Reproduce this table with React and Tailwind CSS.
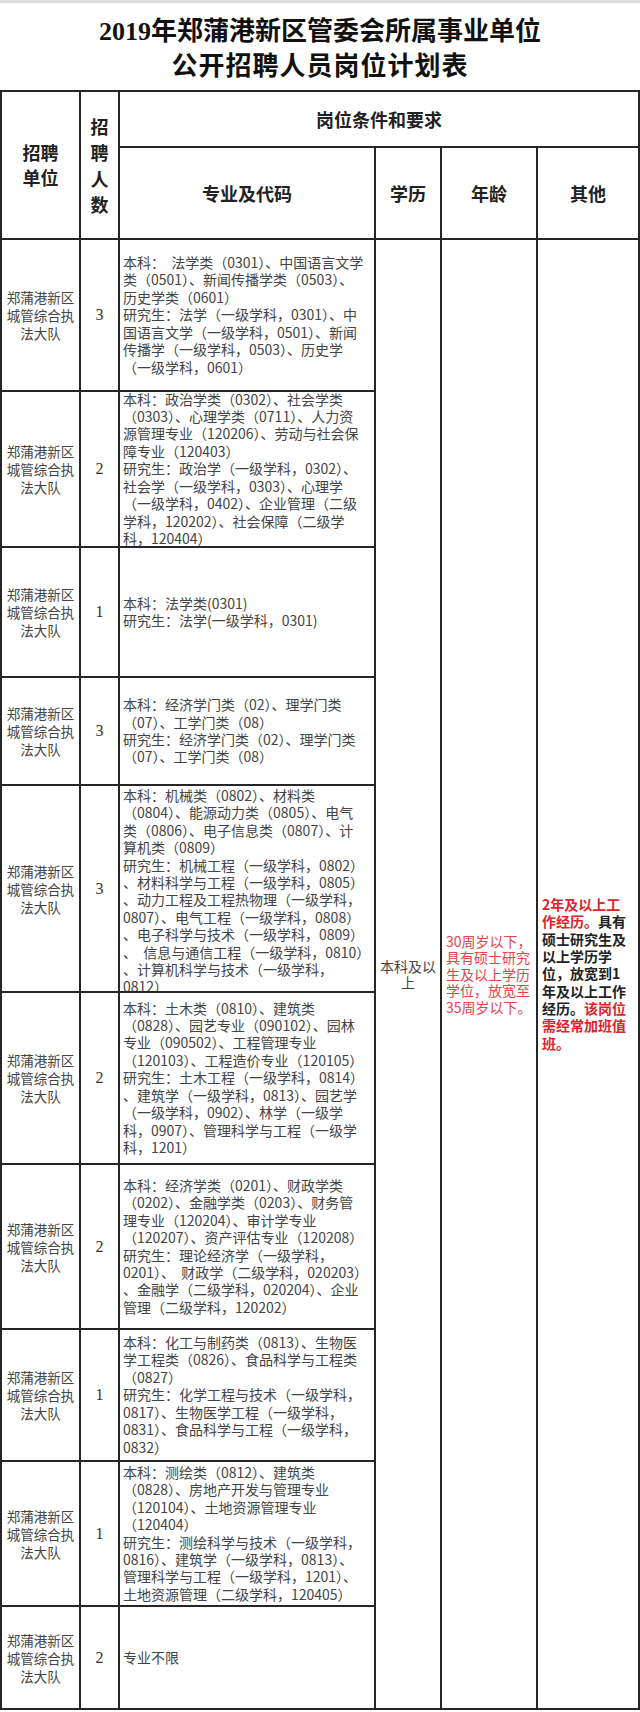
import React from 'react';

const rows = [
  {
    n: '3',
    lines: [
      '本科：  法学类（0301）、中国语言文学',
      '类（0501）、新闻传播学类（0503）、',
      '历史学类（0601）',
      '研究生：法学（一级学科，0301）、中',
      '国语言文学（一级学科，0501）、新闻',
      '传播学（一级学科，0503）、历史学',
      '（一级学科，0601）',
    ],
  },
  {
    n: '2',
    lines: [
      '本科：政治学类（0302）、社会学类',
      '（0303）、心理学类（0711）、人力资',
      '源管理专业（120206）、劳动与社会保',
      '障专业（120403）',
      '研究生：政治学（一级学科，0302）、',
      '社会学（一级学科，0303）、心理学',
      '（一级学科，0402）、企业管理（二级',
      '学科，120202）、社会保障（二级学',
      '科，120404）',
    ],
  },
  {
    n: '1',
    lines: ['本科：法学类(0301)', '研究生：法学(一级学科，0301)'],
  },
  {
    n: '3',
    lines: [
      '本科：经济学门类（02）、理学门类',
      '（07）、工学门类（08）',
      '研究生：经济学门类（02）、理学门类',
      '（07）、工学门类（08）',
    ],
  },
  {
    n: '3',
    clip: true,
    lines: [
      '本科：机械类（0802）、材料类',
      '（0804）、能源动力类（0805）、电气',
      '类（0806）、电子信息类（0807）、计',
      '算机类（0809）',
      '研究生：机械工程（一级学科，0802）',
      '、材料科学与工程（一级学科，0805）',
      '、动力工程及工程热物理（一级学科，',
      '0807）、电气工程（一级学科，0808）',
      '、电子科学与技术（一级学科，0809）',
      '、  信息与通信工程（一级学科，0810）',
      '、计算机科学与技术（一级学科，',
      '0812）',
    ],
  },
  {
    n: '2',
    lines: [
      '本科：土木类（0810）、建筑类',
      '（0828）、园艺专业（090102）、园林',
      '专业（090502）、工程管理专业',
      '（120103）、工程造价专业（120105）',
      '研究生：土木工程（一级学科，0814）',
      '、建筑学（一级学科，0813）、园艺学',
      '（一级学科，0902）、林学（一级学',
      '科，0907）、管理科学与工程（一级学',
      '科，1201）',
    ],
  },
  {
    n: '2',
    lines: [
      '本科：经济学类（0201）、财政学类',
      '（0202）、金融学类（0203）、财务管',
      '理专业（120204）、审计学专业',
      '（120207）、资产评估专业（120208）',
      '研究生：理论经济学（一级学科，',
      '0201）、  财政学（二级学科，020203）',
      '、金融学（二级学科，020204）、企业',
      '管理（二级学科，120202）',
    ],
  },
  {
    n: '1',
    lines: [
      '本科：化工与制药类（0813）、生物医',
      '学工程类（0826）、食品科学与工程类',
      '（0827）',
      '研究生：化学工程与技术（一级学科，',
      '0817）、生物医学工程（一级学科，',
      '0831）、食品科学与工程（一级学科，',
      '0832）',
    ],
  },
  {
    n: '1',
    lines: [
      '本科：测绘类（0812）、建筑类',
      '（0828）、房地产开发与管理专业',
      '（120104）、土地资源管理专业',
      '（120404）',
      '研究生：测绘科学与技术（一级学科，',
      '0816）、建筑学（一级学科，0813）、',
      '管理科学与工程（一级学科，1201）、',
      '土地资源管理（二级学科，120405）',
    ],
  },
  {
    n: '2',
    lines: ['专业不限'],
  },
];

const cell = 'border-r-2 border-b-2 border-[#262626]';

const App = () => {
  return (
    <div className="w-[640px] bg-white font-['Noto_Sans_CJK_SC',sans-serif]">
      <div className="h-[3px] bg-[#dedede]"></div>

      {/* Title */}
      <div className="pt-[11px] pb-[6px] text-center text-[26px] leading-[35px] font-bold text-[#111] font-['Liberation_Serif','Noto_Sans_CJK_SC',serif]">
        <div>2019年郑蒲港新区管委会所属事业单位</div>
        <div className="tracking-[1px]">公开招聘人员岗位计划表</div>
      </div>

      <div className="grid grid-cols-[79px_39px_256px_66px_96px_102px] grid-rows-[56px_92px_152px_156px_130px_108px_207px_172px_165px_132px_145px_103px] border-l-2 border-t-2 border-[#262626]">
        {/* Header */}
        <div className={`${cell} row-span-2 flex flex-col items-center justify-center text-[18px] leading-[25px] font-bold text-[#222]`}>
          <div>招聘</div>
          <div>单位</div>
        </div>
        <div className={`${cell} row-span-2 flex flex-col items-center justify-center text-[18px] leading-[26px] font-bold text-[#222]`}>
          <div>招</div>
          <div>聘</div>
          <div>人</div>
          <div>数</div>
        </div>
        <div className={`${cell} col-span-4 flex items-center justify-center text-[18px] font-bold text-[#222]`}>
          岗位条件和要求
        </div>
        <div className={`${cell} flex items-center justify-center text-[18px] font-bold text-[#222]`}>专业及代码</div>
        <div className={`${cell} flex items-center justify-center text-[18px] font-bold text-[#222]`}>学历</div>
        <div className={`${cell} flex items-center justify-center text-[18px] font-bold text-[#222]`}>年龄</div>
        <div className={`${cell} flex items-center justify-center text-[18px] font-bold text-[#222]`}>其他</div>

        {/* Merged requirement columns */}
        <div className={`${cell} col-start-4 row-start-3 row-span-10 flex flex-col items-center justify-center text-[14px] leading-[16.5px] text-[#444]`}>
          <div>本科及以</div>
          <div>上</div>
        </div>
        <div className={`${cell} col-start-5 row-start-3 row-span-10 flex flex-col justify-center pl-[4px] text-[14px] leading-[16.5px] text-[#e8434c] whitespace-nowrap`}>
          <div>30周岁以下，</div>
          <div>具有硕士研究</div>
          <div>生及以上学历</div>
          <div>学位，放宽至</div>
          <div>35周岁以下。</div>
        </div>
        <div className={`${cell} col-start-6 row-start-3 row-span-10 flex flex-col justify-center pl-[4px] text-[14px] leading-[17.3px] font-bold text-[#222] whitespace-nowrap`}>
          <div className="text-[#e2222b]">2年及以上工</div>
          <div><span className="text-[#e2222b]">作经历。</span>具有</div>
          <div>硕士研究生及</div>
          <div>以上学历学</div>
          <div>位，放宽到1</div>
          <div>年及以上工作</div>
          <div>经历。<span className="text-[#e2222b]">该岗位</span></div>
          <div className="text-[#e2222b]">需经常加班值</div>
          <div className="text-[#e2222b]">班。</div>
        </div>

        {/* Body rows */}
        {rows.map((row, i) => (
          <React.Fragment key={i}>
            <div className={`${cell} flex flex-col items-center justify-center text-[13.5px] leading-[18px] text-[#444]`}>
              <div>郑蒲港新区</div>
              <div>城管综合执</div>
              <div>法大队</div>
            </div>
            <div className={`${cell} flex items-center justify-center text-[16px] text-[#333] font-['Liberation_Serif',serif]`}>
              {row.n}
            </div>
            <div
              className={`${cell} flex flex-col overflow-hidden pl-[3px] text-[14px] leading-[17.4px] text-[#444] whitespace-pre ${
                row.clip ? 'justify-start pt-[1px]' : 'justify-center'
              }`}
            >
              {row.lines.map((line, j) => (
                <div key={j}>{line}</div>
              ))}
            </div>
          </React.Fragment>
        ))}
      </div>
    </div>
  );
};

export default App;
